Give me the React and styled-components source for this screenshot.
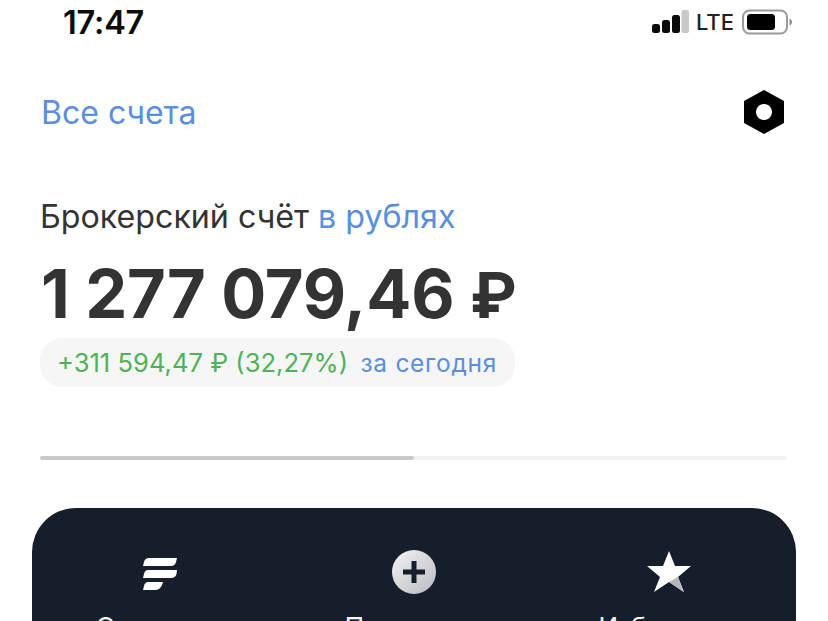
import React from "react";
import styled, { createGlobalStyle } from "styled-components";

const GlobalStyle = createGlobalStyle`
  html, body {
    margin: 0;
    padding: 0;
    background: #fff;
    overflow: hidden;
  }
  * {
    box-sizing: border-box;
  }
`;

const Page = styled.div`
  width: 828px;
  height: 621px;
  overflow: hidden;
  background: #fff;
  font-family: Inter, "Liberation Sans", sans-serif;
  -webkit-font-smoothing: antialiased;
`;

const StatusBar = styled.div`
  height: 45px;
  display: flex;
  align-items: center;
  justify-content: space-between;
  padding: 0 36px 1px 63px;
`;

const Clock = styled.span`
  font-size: 32.5px;
  font-weight: 600;
  color: #0b0b0b;
  letter-spacing: -0.2px;
`;

const StatusRight = styled.div`
  display: flex;
  align-items: center;
  gap: 8px;
`;

const Lte = styled.span`
  font-size: 22px;
  font-weight: 500;
  color: #222;
`;

const TopRow = styled.div`
  height: 46px;
  margin-top: 44px;
  display: flex;
  align-items: center;
  justify-content: space-between;
  padding: 0 44px 0 41px;
`;

const AllAccounts = styled.a`
  font-size: 32px;
  color: #5a8fe0;
`;

const Account = styled.section`
  padding: 0 40px;
  margin-top: 63px;
`;

const AccountTitle = styled.div`
  font-size: 32.2px;
  line-height: 38px;
  color: #333;
`;

const Accent = styled.span`
  color: #5a8fe0;
`;

const Amount = styled.div`
  height: 78px;
  margin-top: 19px;
  padding-left: 1px;
  font-size: 66.8px;
  line-height: 78px;
  font-weight: 700;
  color: #333;
  letter-spacing: -0.2px;
  white-space: nowrap;
`;

const Ruble = styled.span`
  font-size: 63px;
`;

const Pill = styled.div`
  width: 475px;
  height: 49px;
  margin-top: 5px;
  padding: 0 18px 0 17px;
  display: flex;
  align-items: center;
  justify-content: space-between;
  border-radius: 22px;
  background: #f6f6f6;
  font-size: 25.6px;
  white-space: nowrap;
`;

const Gain = styled.span`
  color: #4fb257;
`;

const Today = styled.span`
  font-size: 24.5px;
  color: #5a8fe0;
  letter-spacing: 0.7px;
`;

const Progress = styled.div`
  height: 4px;
  margin: 69px 41px 0 40px;
  border-radius: 2px;
  background: #f1f1f1;
`;

const ProgressFill = styled.div`
  width: 50%;
  height: 100%;
  border-radius: 2px;
  background: #c9c9c9;
`;

const Menu = styled.nav`
  height: 200px;
  margin: 48px 32px 0;
  padding-top: 42px;
  display: grid;
  grid-template-columns: 255px 254px 255px;
  border-radius: 44px 44px 0 0;
  background: #171e2b;
`;

const MenuItem = styled.div`
  display: flex;
  flex-direction: column;
  align-items: center;
  gap: 18px;
  color: #fff;
  font-size: 26px;
  line-height: 30px;
  white-space: nowrap;
`;

const IconBox = styled.div`
  height: 44px;
  display: flex;
  align-items: center;
`;

const Signal = () => (
  <svg width="37" height="24" viewBox="0 0 37 24" style={{ marginRight: -1 }}>
    <rect x="0" y="14" width="8" height="9" rx="2.5" fill="#0b0b0b" />
    <rect x="10" y="10" width="8" height="13" rx="2.5" fill="#0b0b0b" />
    <rect x="20" y="5" width="8" height="18" rx="2.5" fill="#0b0b0b" />
    <rect x="29.5" y="0" width="7.5" height="23" rx="2" fill="#c8c8c8" />
  </svg>
);

const Battery = () => (
  <svg width="50" height="26" viewBox="0 0 50 26">
    <rect x="1" y="1.5" width="44" height="23" rx="6.5" fill="none" stroke="#9a9a9a" strokeWidth="2" />
    <rect x="5" y="5" width="28" height="16" rx="3.5" fill="#000" />
    <path d="M47.5 9.5c1.7.6 2.5 2 2.5 3.5s-.8 2.9-2.5 3.5z" fill="#8f8f8f" />
  </svg>
);

const Nut = () => (
  <svg width="40" height="44" viewBox="0 0 40 44">
    <path
      fillRule="evenodd"
      d="M20 0 L40 11 V33 L20 44 L0 33 V11 Z M20 14 a8 8 0 1 0 0.01 0 Z"
      fill="#000"
    />
  </svg>
);

const FeedIcon = () => (
  <svg width="36" height="40" viewBox="0 -6 36 40">
    <path d="M7 0 H35 L34 4 Q33 8 29 8 H1 L2 4 Q3 0 7 0 Z" fill="#fff" />
    <path d="M6 12 H35 L34.5 16 Q33.5 20 29 20 H1 L2 16 Q3 12 6 12 Z" fill="#fff" />
    <path d="M6 24 H21 L20 27 Q18 32 13 32 H1 L2 28 Q3 24 6 24 Z" fill="#fff" />
  </svg>
);

const PlusIcon = () => (
  <svg width="44" height="44" viewBox="0 0 44 44">
    <defs>
      <linearGradient id="plusFill" x1="0" y1="0" x2="1" y2="1">
        <stop offset="0" stopColor="#f4f4f6" />
        <stop offset="1" stopColor="#b9bac0" />
      </linearGradient>
    </defs>
    <circle cx="22" cy="22" r="22" fill="url(#plusFill)" />
    <path d="M19.5 11 h5 v8.5 h8.5 v5 h-8.5 v8.5 h-5 v-8.5 h-8.5 v-5 h8.5 Z" fill="#171e2b" />
  </svg>
);

const StarIcon = () => (
  <svg width="44" height="42" viewBox="0 0 44 42">
    <path d="M22 0 L28 15 L44 15 L31 26 L37 41 L22 31 L7 41 L13 26 L0 15 L16 15 Z" fill="#fff" strokeLinejoin="round" />
    <path d="M31 26 L36.5 41 L22 31 Z" fill="#b5b6ba" />
  </svg>
);

const menu = [
  { label: "Операции", icon: <FeedIcon /> },
  { label: "Пополнить", icon: <PlusIcon /> },
  { label: "Избранное", icon: <StarIcon /> },
];

export default function App() {
  return (
    <Page>
      <GlobalStyle />
      <StatusBar>
        <Clock>17:47</Clock>
        <StatusRight>
          <Signal />
          <Lte>LTE</Lte>
          <Battery />
        </StatusRight>
      </StatusBar>
      <TopRow>
        <AllAccounts>Все счета</AllAccounts>
        <Nut />
      </TopRow>
      <Account>
        <AccountTitle>
          Брокерский счёт <Accent>в рублях</Accent>
        </AccountTitle>
        <Amount>
          1 277 079,46 <Ruble>₽</Ruble>
        </Amount>
        <Pill>
          <Gain>+311 594,47 ₽ (32,27%)</Gain>
          <Today>за сегодня</Today>
        </Pill>
      </Account>
      <Progress>
        <ProgressFill />
      </Progress>
      <Menu>
        {menu.map((item) => (
          <MenuItem key={item.label}>
            <IconBox>{item.icon}</IconBox>
            {item.label}
          </MenuItem>
        ))}
      </Menu>
    </Page>
  );
}
